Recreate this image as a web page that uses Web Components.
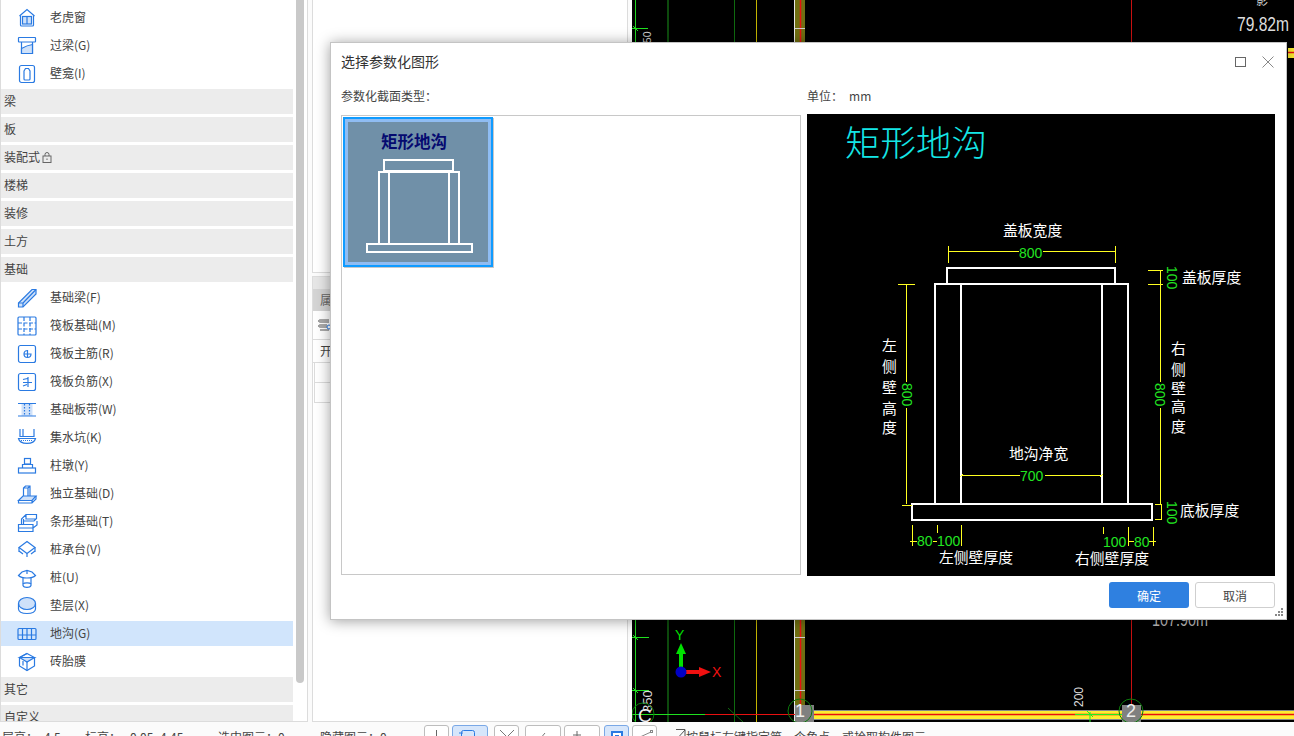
<!DOCTYPE html>
<html lang="zh">
<head>
<meta charset="utf-8">
<title>选择参数化图形</title>
<style>
    html, body { margin: 0; padding: 0; background: #fff; overflow: hidden; }
    body { font: 12px "Noto Sans CJK SC", "Liberation Sans", sans-serif; color: #444; }
</style>
</head>
<body>
<app-shell>
    <tree-panel slot="tree">
        <tree-row icon="dormer">老虎窗</tree-row>
        <tree-row icon="lintel">过梁(G)</tree-row>
        <tree-row icon="niche">壁龛(I)</tree-row>
        <tree-row group>梁</tree-row>
        <tree-row group>板</tree-row>
        <tree-row group locked>装配式</tree-row>
        <tree-row group>楼梯</tree-row>
        <tree-row group>装修</tree-row>
        <tree-row group>土方</tree-row>
        <tree-row group>基础</tree-row>
        <tree-row icon="beam">基础梁(F)</tree-row>
        <tree-row icon="raft">筏板基础(M)</tree-row>
        <tree-row icon="mainbar">筏板主筋(R)</tree-row>
        <tree-row icon="negbar">筏板负筋(X)</tree-row>
        <tree-row icon="strip">基础板带(W)</tree-row>
        <tree-row icon="sump">集水坑(K)</tree-row>
        <tree-row icon="pier">柱墩(Y)</tree-row>
        <tree-row icon="footing">独立基础(D)</tree-row>
        <tree-row icon="stripfoot">条形基础(T)</tree-row>
        <tree-row icon="cap">桩承台(V)</tree-row>
        <tree-row icon="pile">桩(U)</tree-row>
        <tree-row icon="pad">垫层(X)</tree-row>
        <tree-row icon="trench" selected>地沟(G)</tree-row>
        <tree-row icon="brick">砖胎膜</tree-row>
        <tree-row group>其它</tree-row>
        <tree-row group>自定义</tree-row>
    </tree-panel>
    <props-panel slot="props"></props-panel>
    <cad-canvas slot="canvas"></cad-canvas>
    <status-bar slot="status"></status-bar>
    <param-dialog slot="dialog" heading="选择参数化图形"></param-dialog>
</app-shell>

<script>
const BLUE = '#2a7ae2';
const TINT = '#cfe1f9';

// 24x24 tree icons, traced from the reference
const ICONS = {
    dormer: `<path d="M4.500 10 12 3.500 19.500 10"/><path d="M5.500 9.500V19a1 1 0 0 0 1 1h11a1 1 0 0 0 1-1V9.500"/><rect x="7.500" y="10.500" width="9" height="7.500" fill="${TINT}"/><path d="M12 10.500V18"/>`,
    lintel: `<rect x="3.500" y="3.500" width="17" height="4.500" rx=".5"/><path d="M6.500 8v11.500h11V8" /><path d="M6.500 14.500C10 12.500 14 11 17.500 10.500V19.500H6.500Z" fill="${TINT}"/>`,
    niche: `<rect x="4.500" y="3.500" width="15" height="17" rx="2"/><path d="M9 9 10.500 6.500H13.500L15 9V17a1 1 0 0 1-1 1H10a1 1 0 0 1-1-1Z"/>`,
    beam: `<path d="M3.500 17V21H8L21 8V3.500H17Z" fill="${TINT}"/><path d="M3.500 17H8V21M8 17 21 3.500"/>`,
    raft: `<rect x="3" y="3" width="18" height="18" rx="1"/><path d="M3 9H21M3 15H21M9 3V21M15 3V21" stroke-dasharray="4 1.500"/>`,
    mainbar: `<rect x="3.500" y="3.500" width="17" height="17" rx="2"/><path d="M12.500 8.500a3.500 3.500 0 1 0 3.500 3.500H9M12.500 8V16"/>`,
    negbar: `<rect x="3.500" y="3.500" width="17" height="17" rx="2"/><path d="M8 9.500 12.500 8.500M8 12.500H17M13 7V17M8 16 12 14.500"/>`,
    strip: `<rect x="6.500" y="5" width="11" height="13" fill="${TINT}" stroke="none"/><path d="M3 5.500H21M3 18H21"/><path d="M9.500 6V18M14.500 6V18" stroke-dasharray="1.500 1.500"/>`,
    sump: `<path d="M5 3v7.500h3V3M5 10.500H19V3"/><path d="M3.500 12.500C5 19 19 19 20.500 12.500Z"/><path d="M6 14.500H18" stroke-dasharray="1 1"/>`,
    pier: `<rect x="9.500" y="4.500" width="6" height="5.500"/><path d="M7.500 14V10.500H17.500V14"/><rect x="3.500" y="14" width="17" height="5"/>`,
    footing: `<path d="M8.500 14V6L10.500 4H15V14M8.500 6H13V14M15 4 13 6"/><path d="M3.500 18.500 8 14H21L17 18.500Z" fill="${TINT}"/><path d="M3.500 18.500V21H17L21 17V14M17 18.500V21"/>`,
    stripfoot: `<path d="M6.500 14V9L11 4.500H21.500V8.500L19 11H8.500M8.500 9V14M11 4.500V9H21"/><path d="M3.500 14.500H18V21.500H3.500ZM3.500 18H18M18 18 22 15V11"/>`,
    cap: `<path d="M12 3.500 20 9.500 12 15.500 4 9.500Z"/><path d="M4 9.500V14M20 9.500V14M12 15.500V19M4 13 8 16M20 13 16 16"/>`,
    pile: `<path d="M3.500 9.500 7 6 12 4.500 17 6 20.500 9.500C19 11 16 12 12 12S5 11 3.500 9.500Z" /><path d="M8 12V19.500C9 22 15 22 16 19.500V12"/><path d="M12 4.500V8M8 18C9 16.500 15 16.500 16 18"/>`,
    pad: `<ellipse cx="12" cy="9.500" rx="8.500" ry="6" fill="${TINT}"/><path d="M3.500 9.500V15C4 21 20 21 20.500 15V9.500"/>`,
    trench: `<rect x="3" y="6.500" width="18" height="11" rx="1"/><path d="M3 13H21M7.500 7V17.500M12 7V17.500M16.500 7V17.500"/>`,
    brick: `<path d="M12 3.500 19.500 7.500V16L12 20.500 4.500 16V7.500Z"/><path d="M4.500 7.500 12 12 19.500 7.500Z" fill="${TINT}"/><path d="M12 12V20.500M8 11V15.500M4.500 7.500 12 3.500"/>`,
};

class AppShell extends HTMLElement {
    constructor() {
        super();
        this._shadowRoot = this.attachShadow({mode: 'open'});
        this._shadowRoot.innerHTML = `
            <style>
                :host {
                    position: relative;
                    display: grid;
                    grid-template-columns: 308px 316px 662px;
                    grid-template-rows: 722px 14px;
                    column-gap: 4px;
                    width: 1294px;
                    height: 736px;
                    overflow: hidden;
                    background: #fbfbfb;
                }
                ::slotted([slot="status"]) { grid-column: 1 / -1; }
            </style>
            <slot name="tree"></slot>
            <slot name="props"></slot>
            <slot name="canvas"></slot>
            <slot name="status"></slot>
            <slot name="dialog"></slot>
        `;
    }
}

class TreePanel extends HTMLElement {
    constructor() {
        super();
        this._shadowRoot = this.attachShadow({mode: 'open'});
        this._shadowRoot.innerHTML = `
            <style>
                :host {
                    display: flex;
                    box-sizing: border-box;
                    height: 722px;
                    background: #fff;
                    border: 1px solid #dcdcdc;
                    border-top: 0;
                    overflow: hidden;
                }
                .rows {
                    display: flex;
                    flex-direction: column;
                    gap: 3px;
                    width: 292px;
                    padding-top: 5px;
                }
                .thumb {
                    width: 8px;
                    height: 683px;
                    margin-left: 3px;
                    background: #c9c9c9;
                    border-radius: 0 0 4px 4px;
                }
            </style>
            <div class="rows"><slot></slot></div>
            <div class="thumb"></div>
        `;
    }
}

class TreeRow extends HTMLElement {
    constructor() {
        super();
        this._shadowRoot = this.attachShadow({mode: 'open'});
    }

    connectedCallback() {
        const group = this.hasAttribute('group');
        const icon = ICONS[this.getAttribute('icon')];
        const lock = this.hasAttribute('locked') ? `
            <svg class="lock" width="10" height="11" viewBox="0 0 10 11" fill="none" stroke="#666" stroke-width="1">
                <rect x="1" y="4" width="8" height="6.500"/><path d="M3 4V2.500a2 2 0 0 1 4 0V4"/><path d="M5 6.500V8"/>
            </svg>` : '';
        this._shadowRoot.innerHTML = `
            <style>
                :host {
                    display: flex;
                    flex: none;
                    align-items: center;
                    height: 25px;
                    color: #444;
                    font: 12px "Noto Sans CJK SC", "Liberation Sans", sans-serif;
                    background: ${group ? '#ececec' : 'transparent'};
                    padding-left: ${group ? 3 : 14}px;
                }
                :host([selected]) { background: #d1e5fc; }
                svg.ic { flex: none; margin-right: 11px; }
                .t { margin-bottom: 2px; }
                .lock { margin-left: 2px; }
            </style>
            ${icon ? `<svg class="ic" width="24" height="24" viewBox="0 0 24 24" fill="none" stroke="${BLUE}" stroke-width="1.200">${icon}</svg>` : ''}
            <span class="t"><slot></slot></span>${lock}
        `;
    }
}

class PropsPanel extends HTMLElement {
    constructor() {
        super();
        this._shadowRoot = this.attachShadow({mode: 'open'});
        this._shadowRoot.innerHTML = `
            <style>
                :host {
                    display: flex;
                    flex-direction: column;
                    gap: 3px;
                    height: 722px;
                    font: 12px "Noto Sans CJK SC", "Liberation Sans", sans-serif;
                    color: #444;
                }
                .box {
                    box-sizing: border-box;
                    border: 1px solid #dcdcdc;
                    border-top: 0;
                    background: #fff;
                }
                .top { height: 273px; }
                .bottom {
                    flex: 1;
                    border-top: 1px solid #dcdcdc;
                    display: flex;
                    flex-direction: column;
                }
                .strip { height: 12px; background: #e6e6e6; }
                .tab {
                    height: 22px;
                    width: 60px;
                    padding-left: 7px;
                    line-height: 22px;
                    background: #d4d4d4;
                    color: #666;
                }
                .tools {
                    height: 28px;
                    display: flex;
                    align-items: center;
                    padding-left: 5px;
                    border-bottom: 1px solid #dcdcdc;
                }
                .row {
                    height: 22px;
                    line-height: 22px;
                    padding-left: 7px;
                    border-bottom: 1px solid #dcdcdc;
                }
                .row.blank {
                    height: 19px;
                    margin-left: 1px;
                    border-left: 1px solid #dcdcdc;
                }
            </style>
            <div class="box top"></div>
            <div class="box bottom">
                <div class="strip"></div>
                <div class="tab">属</div>
                <div class="tools">
                    <svg width="16" height="16" viewBox="0 0 16 16" fill="none" stroke="#555" stroke-width="1">
                        <path d="M2 3H11M2 8H9M2 13H11M2 3C0 3 0 5 2 5H11M2 8C0 8 0 10 2 10H9"/>
                        <circle cx="11" cy="10" r="2" stroke="${BLUE}"/>
                    </svg>
                </div>
                <div class="row">开</div>
                <div class="row blank"></div>
                <div class="row blank"></div>
            </div>
        `;
    }
}

class CadCanvas extends HTMLElement {
    constructor() {
        super();
        this._shadowRoot = this.attachShadow({mode: 'open'});
        this._shadowRoot.innerHTML = `
            <style>
                :host { display: block; height: 722px; background: #000; overflow: hidden; }
                svg { display: block; }
                text { font-family: "Liberation Sans", sans-serif; }
            </style>
            <svg width="662" height="722" viewBox="632 0 662 722">
                <path d="M635.500 0V722" stroke="#1fd41f"/>
                <rect x="667" y="0" width="2" height="722" fill="#0d4a0d"/>
                <path d="M734.500 0V722" stroke="#0f6a0f"/>
                <path d="M756.500 0V722" stroke="#c2b400"/>
                <path d="M794.500 0V722" stroke="#e8e8e8"/>
                <rect x="795" y="0" width="10" height="722" fill="#6f6f12"/>
                <path d="M800.500 0V722" stroke="#e81010" stroke-width="1.500"/>
                <path d="M795 28.500H805M795 637.500H805M795 690.500H805" stroke="#ccc"/>
                <path d="M1131.500 0V705" stroke="#c81010"/>

                <path d="M632 28.500H648M632 637.500H649M632 690.500H649M633 26 638 31M633 635 638 640M633 688 638 693" stroke="#1fe01f"/>
                <text transform="translate(651 49) rotate(-90)" fill="#ccc" font-size="10.500">350</text>
                <text transform="translate(652 712) rotate(-90)" fill="#ddd" font-size="13">350</text>

                <rect x="1288" y="48" width="6" height="10" fill="#ffee30"/>
                <path d="M1288 52.500H1294" stroke="#e81010" stroke-width="1.500"/>

                <path d="M632 714.500H705" stroke="#1fe01f"/>
                <path d="M705 714.500H795" stroke="#e81010"/>
                <path d="M728 708 743 722" stroke="#0f6a0f"/>

                <rect x="679" y="653" width="4" height="15" fill="#00e000"/>
                <path d="M681 643 686 654H676Z" fill="#00e000"/>
                <rect x="686" y="670" width="14" height="4" fill="#f01010"/>
                <path d="M711 672 699 667V677Z" fill="#f01010"/>
                <circle cx="681" cy="672" r="5.500" fill="#0000c4"/>
                <text x="675" y="640" fill="#00e000" font-size="14">Y</text>
                <text x="712" y="677" fill="#f01010" font-size="14">X</text>

                <rect x="814" y="710" width="480" height="10" fill="#ffee30"/>
                <path d="M814 710.500H1294M814 719.500H1294" stroke="#888"/>
                <path d="M814 714.500H1294" stroke="#e81010" stroke-width="1.500"/>
                <path d="M1075 714.500H1125M1090 712V722M1087 711 1093 717" stroke="#20f020"/>
                <text transform="translate(1083 707) rotate(-90)" fill="#ddd" font-size="12">200</text>

                <rect x="795" y="705" width="19" height="17" fill="#808080"/>
                <rect x="1122" y="705" width="19" height="17" fill="#808080"/>
                <circle cx="800" cy="711" r="12" fill="none" stroke="#0c7a0c"/>
                <circle cx="1131" cy="711" r="12" fill="none" stroke="#0c7a0c"/>
                <circle cx="643" cy="714" r="11" fill="none" stroke="#0c7a0c"/>
                <text x="795" y="717" fill="#eee" font-size="18">1</text>
                <text x="1126" y="717" fill="#eee" font-size="18">2</text>
                <text x="638" y="722" fill="#eee" font-size="19">C</text>

                <text x="1237" y="31" fill="#ddd" font-size="20" textLength="52" lengthAdjust="spacingAndGlyphs">79.82m</text>
                <text x="1256" y="5" fill="#ccc" font-size="12" style="font-family:'Noto Sans CJK SC',sans-serif">影</text>
                <text x="1152" y="626" fill="#bbb" font-size="19" textLength="56" lengthAdjust="spacingAndGlyphs">107.90m</text>
            </svg>
        `;
    }
}

class StatusBar extends HTMLElement {
    constructor() {
        super();
        this._shadowRoot = this.attachShadow({mode: 'open'});
        this._shadowRoot.innerHTML = `
            <style>
                :host {
                    display: flex;
                    align-items: flex-start;
                    height: 14px;
                    overflow: hidden;
                    background: #fbfbfb;
                    color: #444;
                    font: 12px/20px "Noto Sans CJK SC", "Liberation Sans", sans-serif;
                    padding-left: 2px;
                }
                span { flex: none; margin-top: 5px; }
                .tools { flex: none; display: flex; margin-top: 3px; }
                .b {
                    box-sizing: border-box;
                    height: 24px;
                    border: 1px solid #bdbdbd;
                    border-radius: 3px;
                    background: #fff;
                }
                .b.on { background: #d6e6fb; border-color: #7aa8e6; }
                .b svg { display: block; margin: 4px 0 0 5px; }
            </style>
            <span style="width:42px">层高：</span>
            <span style="width:41px">4.5</span>
            <span style="width:45px">标高：</span>
            <span style="width:88px">0.05~4.45</span>
            <span style="width:102px">选中图元：0</span>
            <span style="width:104px">隐藏图元：0</span>
            <div class="tools">
                <div class="b" style="width:25px;margin-right:3px"><svg width="14" height="12" fill="none" stroke="#666"><path d="M6.500 0V12"/></svg></div>
                <div class="b on" style="width:36px;margin-right:6px"><svg width="20" height="12" fill="none" stroke="#2a7ae2"><rect x="3.500" y=".5" width="13" height="11" rx="2"/><path d="M1 3H5"/></svg></div>
                <div class="b" style="width:25px;margin-right:6px"><svg width="14" height="12" fill="none" stroke="#777"><path d="M0 0 7 7 14 0"/></svg></div>
                <div class="b" style="width:36px;margin-right:3px"><svg width="20" height="12" fill="none" stroke="#777"><path d="M14 3 9 9"/></svg></div>
                <div class="b" style="width:36px;margin-right:4px"><svg width="20" height="12" fill="none" stroke="#666"><path d="M7 1V9M3 5H11"/></svg></div>
                <div class="b on" style="width:25px;margin-right:3px"><svg width="14" height="12" fill="#fff" stroke="#2a7ae2" stroke-width="2"><rect x="2" y="2" width="10" height="11"/><rect x="5" y="5" width="4" height="5" fill="#2a7ae2" stroke="none"/></svg></div>
                <div class="b" style="width:25px"><svg width="16" height="12" fill="none" stroke="#888"><path d="M2 7 13 2"/><rect x="0.500" y="6.500" width="2" height="2"/><rect x="12.500" y="0.500" width="2" height="2"/></svg></div>
            </div>
            <svg width="12" height="14" viewBox="0 0 12 14" style="margin:7px 0 0 17px;flex:none" fill="none" stroke="#555">
                <path d="M2 .5H11V9M11 1 1 12"/>
            </svg>
            <span>按鼠标左键指定第一个角点，或拾取构件图元</span>
        `;
    }
}

class SectionTile extends HTMLElement {
    constructor() {
        super();
        this._shadowRoot = this.attachShadow({mode: 'open'});
        this._shadowRoot.innerHTML = `
            <style>
                :host {
                    display: block;
                    box-sizing: border-box;
                    width: 150px;
                    height: 150px;
                    border: 2px solid #0f9bff;
                    box-shadow: 1px 1px 0 #c8c8c8;
                }
                svg { display: block; border: 3px solid #8fbcf2; box-sizing: border-box; }
                text { font: bold 16.500px "Noto Sans CJK SC", sans-serif; fill: #050a70; }
            </style>
            <svg width="146" height="146" viewBox="348 122 140 140">
                <rect x="348" y="122" width="140" height="140" fill="#7090a8"/>
                <text x="381" y="148">矩形地沟</text>
                <g fill="none" stroke="#fff" stroke-width="2">
                    <rect x="384" y="160" width="69" height="11"/>
                    <path d="M379 243V172H389V243M449 243V172H459V243M389 172H449"/>
                    <rect x="367" y="244" width="105" height="8"/>
                </g>
            </svg>
        `;
    }
}

class SectionPreview extends HTMLElement {
    constructor() {
        super();
        this._shadowRoot = this.attachShadow({mode: 'open'});
        const dim = (x, y, t) => `<text class="dim" x="${x}" y="${y}">${t}</text>`;
        const vdim = (x, y, t) => `<text class="dim" transform="translate(${x} ${y}) rotate(90)">${t}</text>`;
        const label = (x, y, t) => `<text class="lb" x="${x}" y="${y}">${t}</text>`;
        const column = (x, ys, t) => [...t].map((c, i) => label(x, ys[i], c)).join('');
        this._shadowRoot.innerHTML = `
            <style>
                :host { display: block; width: 468px; height: 462px; background: #000; }
                svg { display: block; }
                .title { font: 300 35.500px "Noto Sans CJK SC", sans-serif; fill: #14e6e6; }
                .lb { font: 14.800px "Noto Sans CJK SC", sans-serif; fill: #fff; }
                .dim { font: 14px "Liberation Sans", sans-serif; fill: #22e622; }
            </style>
            <svg width="468" height="462" viewBox="807 114 468 462">
                <text class="title" x="845" y="156">矩形地沟</text>

                <g fill="none" stroke="#fff" stroke-width="2">
                    <path d="M947 284V268H1115V284"/>
                    <path d="M935 504V284H1128V504M961 284V504M1102 284V504"/>
                    <rect x="912" y="504" width="240" height="16"/>
                </g>

                <g fill="none" stroke="#ffff20" stroke-width="1">
                    <path d="M948.500 246V263M1115.500 246V263M948 251.500H1019M1043 251.500H1115"/>
                    <path d="M898 284.500H915M906.500 284V382M906.500 408V504M902 505.500H912"/>
                    <path d="M1148 270.500H1163M1148 284.500H1163M1160.500 270V284M1160.500 284V382M1160.500 408V504"/>
                    <path d="M961 475.500H1020M1045 475.500H1102M960 477 963 474M1100 477 1103 474"/>
                    <path d="M1155 504.500H1162M1155 519.500H1162M1161.500 505V520"/>
                    <path d="M912.500 525V546M937.500 525V533M961.500 525V546M910 541.500H917M933 541.500H937"/>
                    <path d="M1103.500 527V534M1128.500 527V546M1153.500 527V546M1128 541.500H1134M1149 541.500H1156"/>
                </g>

                ${dim(1019, 258, '800')}
                ${dim(1020, 481, '700')}
                ${dim(917, 546, '80')}
                ${dim(937, 546, '100')}
                ${dim(1103, 547, '100')}
                ${dim(1134, 547, '80')}
                ${vdim(1167, 266, '100')}
                ${vdim(1167, 501, '100')}
                ${vdim(902, 383, '800')}
                ${vdim(1155, 383, '800')}

                ${label(1003, 236, '盖板宽度')}
                ${label(1182, 283, '盖板厚度')}
                ${label(1009, 459, '地沟净宽')}
                ${label(1180, 516, '底板厚度')}
                ${label(939, 563, '左侧壁厚度')}
                ${label(1075, 564, '右侧壁厚度')}
                ${column(882, [351, 372, 393, 414, 433], '左侧壁高度')}
                ${column(1171, [354, 375, 394, 412, 432], '右侧壁高度')}
            </svg>
        `;
    }
}

class ParamDialog extends HTMLElement {
    constructor() {
        super();
        this._shadowRoot = this.attachShadow({mode: 'open'});
        this._shadowRoot.innerHTML = `
            <style>
                :host {
                    position: absolute;
                    left: 330px;
                    top: 42px;
                    box-sizing: border-box;
                    width: 957px;
                    height: 578px;
                    display: flex;
                    flex-direction: column;
                    padding: 0 11px 0 10px;
                    background: #fff;
                    border: 1px solid #c4c4c4;
                    box-shadow: 0 1px 13px rgba(0, 0, 0, .38);
                    color: #444;
                    font: 12px "Noto Sans CJK SC", "Liberation Sans", sans-serif;
                }
                header {
                    height: 38px;
                    display: flex;
                    align-items: center;
                    font-size: 14px;
                    color: #333;
                }
                header .title { margin-bottom: 2px; }
                header .fill { flex: 1; }
                header svg { display: block; margin-left: 15px; }
                .cols {
                    display: grid;
                    grid-template-columns: 460px 468px;
                    column-gap: 6px;
                }
                .labels { height: 30px; align-items: center; margin-bottom: 3px; }
                .labels > div { margin-bottom: 2px; }
                .unit { display: flex; gap: 6px; }
                .list {
                    box-sizing: border-box;
                    height: 460px;
                    margin-top: 1px;
                    padding: 1px;
                    border: 1px solid #c8c8c8;
                }
                footer {
                    display: flex;
                    justify-content: flex-end;
                    gap: 6px;
                    margin-top: 6px;
                }
                button {
                    box-sizing: border-box;
                    width: 80px;
                    height: 26px;
                    padding: 0;
                    border-radius: 3px;
                    font: inherit;
                }
                .ok { border: 0; background: #2f80e0; color: #fff; }
                .no { border: 1px solid #cfcfcf; background: #fff; color: #444; }
                .grip {
                    position: absolute;
                    right: 3px;
                    bottom: 3px;
                }
            </style>
            <header>
                <span class="title">${this.getAttribute('heading')}</span>
                <span class="fill"></span>
                <svg width="12" height="12" viewBox="0 0 12 12" fill="none" stroke="#666"><rect x="1.500" y="1.500" width="10" height="9"/></svg>
                <svg width="14" height="14" viewBox="0 0 14 14" fill="none" stroke="#888"><path d="M1.500 1.500 12.500 12.500M12.500 1.500 1.500 12.500"/></svg>
            </header>
            <div class="cols labels">
                <div>参数化截面类型：</div>
                <div class="unit"><span>单位：</span><span>mm</span></div>
            </div>
            <div class="cols">
                <div class="list"><section-tile></section-tile></div>
                <section-preview></section-preview>
            </div>
            <footer>
                <button class="ok">确定</button>
                <button class="no">取消</button>
            </footer>
            <svg class="grip" width="8" height="8" fill="#888">
                <rect x="6" y="0" width="2" height="2"/><rect x="3" y="3" width="2" height="2"/><rect x="6" y="3" width="2" height="2"/>
                <rect x="0" y="6" width="2" height="2"/><rect x="3" y="6" width="2" height="2"/><rect x="6" y="6" width="2" height="2"/>
            </svg>
        `;
    }
}

customElements.define('app-shell', AppShell);
customElements.define('tree-panel', TreePanel);
customElements.define('tree-row', TreeRow);
customElements.define('props-panel', PropsPanel);
customElements.define('cad-canvas', CadCanvas);
customElements.define('status-bar', StatusBar);
customElements.define('section-tile', SectionTile);
customElements.define('section-preview', SectionPreview);
customElements.define('param-dialog', ParamDialog);
</script>
</body>
</html>
